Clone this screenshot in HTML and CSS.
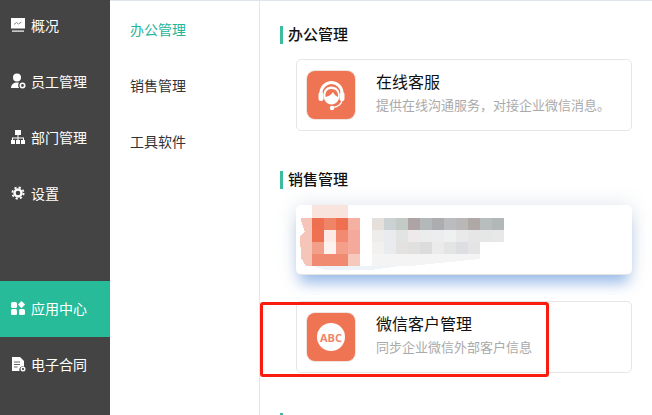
FILE: index.html
```html
<!DOCTYPE html>
<html lang="zh-CN">
<head>
    <meta charset="UTF-8">
    <meta name="viewport" content="width=device-width, initial-scale=1.0">
    <title>应用中心</title>
    <link rel="stylesheet" href="styles.css">
</head>
<body>
    <aside class="sidebar">
        <ul class="side-menu">
            <li class="side-item">
                <svg class="side-icon" viewBox="0 0 16 16"><path fill="#fff" d="M1 1h14v10.500H1z"/><path fill="none" stroke="#888" d="M4 7.500l2.500-2 2 1.500L11.500 5"/><path fill="#fff" d="M2 13.500h12v1.200H2z"/></svg>
                概况
            </li>
            <li class="side-item">
                <svg class="side-icon" viewBox="0 0 16 16"><circle cx="7" cy="4.500" r="4" fill="#fff"/><path fill="#fff" d="M1 15c0-3 2-5.500 6-5.500 .8 0 1.400.1 2 .3-1 1.200-1.200 3.500 0 5.200H1z"/><circle cx="12.500" cy="12.500" r="2.200" fill="none" stroke="#fff" stroke-width="1.600"/></svg>
                员工管理
            </li>
            <li class="side-item">
                <svg class="side-icon" viewBox="0 0 16 16"><path fill="#fff" d="M5 1h6v5H5zM7.500 6h1v2.500h5.500V11h-1V9.500H8.500V11h-1V9.500H3V11H2V8.500h5.500z"/><path fill="#fff" d="M1 11h4v4H1zM6 11h4v4H6zM11 11h4v4h-4z"/></svg>
                部门管理
            </li>
            <li class="side-item">
                <svg class="side-icon" viewBox="0 0 16 16"><circle cx="8" cy="8" r="3.500" fill="none" stroke="#fff" stroke-width="2.400"/><circle cx="8" cy="8" r="5.600" fill="none" stroke="#fff" stroke-width="1.800" stroke-dasharray="2.200 2.200"/></svg>
                设置
            </li>
            <li class="side-item side-item-active">
                <svg class="side-icon" viewBox="0 0 16 16"><rect x="1" y="2" width="6" height="6" rx="1.500" fill="#fff"/><path fill="#fff" d="M11.500 1l3.600 3.600-3.600 3.600L8 4.600z"/><rect x="1" y="9" width="6" height="6" rx="1.500" fill="#fff"/><rect x="9" y="9" width="6" height="6" rx="1.500" fill="#fff"/></svg>
                应用中心
            </li>
            <li class="side-item">
                <svg class="side-icon" viewBox="0 0 16 16"><path fill="#fff" d="M2 1h8l4 4v5.500a3.500 3.500 0 0 0-4.500 4.500H2z"/><path stroke="#666" d="M4 6h6M4 8.500h6M4 11h3.500"/><circle cx="13" cy="13" r="1.800" fill="none" stroke="#fff" stroke-width="1.400"/></svg>
                电子合同
            </li>
        </ul>
    </aside>

    <nav class="sub-nav">
        <a class="sub-link sub-link-active">办公管理</a>
        <a class="sub-link">销售管理</a>
        <a class="sub-link">工具软件</a>
    </nav>

    <main class="content">
        <section class="section">
            <h2 class="section-title">办公管理</h2>
            <div class="card">
                <div class="card-icon">
                    <svg viewBox="0 0 48 48" width="48" height="48">
                        <path fill="none" stroke="#fff" stroke-width="3" d="M14 25v-3a10.500 10.500 0 0 1 21 0v3"/>
                        <rect x="11.500" y="21" width="5" height="9" rx="2.500" fill="#fff"/>
                        <rect x="32.500" y="21" width="5" height="9" rx="2.500" fill="#fff"/>
                        <path fill="#fff" d="M16.500 24c0-5 3-8.500 8-8.500s8 3.500 8 8.500c0 5.500-3.500 9.500-8 9.500s-8-4-8-9.500z"/>
                        <path fill="#ee7454" d="M18.500 26c3.500-.5 6-2.500 7.500-5 1 2 2.500 4 5 5 .5-5-2-8-6.500-8s-6.500 3-6 8z"/>
                        <path fill="none" stroke="#fff" stroke-width="1.400" d="M35 29c0 4-4 7-9 7.500"/>
                        <circle cx="25" cy="37" r="2.200" fill="#fff"/>
                    </svg>
                </div>
                <div class="card-text">
                    <div class="card-title">在线客服</div>
                    <div class="card-desc">提供在线沟通服务，对接企业微信消息。</div>
                </div>
            </div>
        </section>

        <section class="section">
            <h2 class="section-title">销售管理</h2>
            <div class="card card-hover">
                <!-- pixelated part of the screenshot, coordinates are card relative -->
                <svg class="mosaic" viewBox="0 0 336 70" width="336" height="70" shape-rendering="crispEdges">
                    <path fill="#f9e3dd" d="M16 0h36v13H16z"/>
                    <path fill="#f5c5b9" d="M5 13h11v48h-6l-5-8-1-22 5-4-4-12z"/>
                    <path fill="#ee7050" d="M16 13h12v12H16z"/><path fill="#f08468" d="M28 13h12v12H28z"/><path fill="#ee7050" d="M40 13h12v12H40z"/><path fill="#f4b0a0" d="M52 13h12v12H52z"/>
                    <path fill="#ee7252" d="M16 25h12v12H16z"/><path fill="#fdeae4" d="M28 25h12v12H28z"/><path fill="#f18a70" d="M40 25h12v12H40z"/><path fill="#f4a99a" d="M52 25h12v12H52z"/>
                    <path fill="#f3a08a" d="M16 37h12v12H16z"/><path fill="#fef2ee" d="M28 37h12v12H28z"/><path fill="#f39f8a" d="M40 37h12v12H40z"/><path fill="#f4a99a" d="M52 37h12v12H52z"/>
                    <path fill="#f08a70" d="M16 49h36v12H16z"/><path fill="#f7c8bc" d="M52 49h12v12H52z"/>
                    <path fill="#eef3fa" d="M16 61h88l-30 4H30z"/>
                    <path fill="#e5e0dc" d="M76 13h12v12H76z"/><path fill="#ccd1d3" d="M88 13h12v12H88z"/><path fill="#c3cbc6" d="M100 13h12v12h-12z"/><path fill="#aea3a5" d="M112 13h12v12h-12z"/><path fill="#b3b8b9" d="M124 13h12v12h-12z"/><path fill="#adadaf" d="M136 13h12v12h-12z"/><path fill="#babcc0" d="M148 13h12v12h-12z"/><path fill="#bab8b7" d="M160 13h12v12h-12z"/><path fill="#aea9a7" d="M172 13h12v12h-12z"/><path fill="#b8bebd" d="M184 13h12v12h-12z"/><path fill="#b2b7b7" d="M196 13h12v12h-12z"/>
                    <path fill="#eeedeb" d="M76 25h12v12H76z"/><path fill="#e9ebee" d="M88 25h12v12H88z"/><path fill="#e2e4e4" d="M100 25h12v12h-12z"/><path fill="#eeeaec" d="M112 25h12v12h-12z"/><path fill="#ebecec" d="M124 25h12v12h-12z"/><path fill="#ecedee" d="M136 25h12v12h-12z"/><path fill="#eff0f0" d="M148 25h12v12h-12z"/><path fill="#e9e9ea" d="M160 25h12v12h-12z"/><path fill="#e6e6e7" d="M172 25h12v12h-12z"/><path fill="#e5e6e6" d="M184 25h12v12h-12z"/><path fill="#e8e8e8" d="M196 25h12v12h-12z"/>
                    <path fill="#f2f1ef" d="M76 37h12v12H76z"/><path fill="#e9ebee" d="M88 37h12v12H88z"/><path fill="#e3e2e1" d="M100 37h12v12h-12z"/><path fill="#e0e0e0" d="M112 37h12v12h-12z"/><path fill="#dcdcdc" d="M124 37h12v12h-12z"/><path fill="#ebebec" d="M136 37h12v12h-12z"/><path fill="#e4e4e5" d="M148 37h12v12h-12z"/><path fill="#dddee1" d="M160 37h12v12h-12z"/><path fill="#e4e4e4" d="M172 37h12v12h-12z"/>
                    <path fill="#f4f4f4" d="M76 49h108v5l-70 7H76z"/>
                </svg>
            </div>
            <div class="card">
                <div class="card-icon">
                    <span class="abc-badge">ABC</span>
                </div>
                <div class="card-text">
                    <div class="card-title">微信客户管理</div>
                    <div class="card-desc">同步企业微信外部客户信息</div>
                </div>
            </div>
        </section>

        <section class="section">
            <div class="section-title"></div>
        </section>
    </main>

    <div class="red-mark"></div>
</body>
</html>
```

FILE: styles.css
```css
html, body {
    height: 100%;
    margin: 0;
}

body {
    display: flex;
    overflow: hidden;
    color: #222;
    background: #fff;
    font-family: "Noto Sans CJK SC", "Liberation Sans", sans-serif;
    font-size: 14px;
}

/* left dark menu */
.sidebar {
    flex: 0 0 110px;
    background: #444;
    color: #fff;
}

.side-menu {
    list-style: none;
    margin: -2px 0 0;
    padding: 0;
}

.side-item {
    display: flex;
    align-items: center;
    gap: 5px;
    box-sizing: border-box;
    height: 56px;
    padding: 0 0 2px 10px;
}

.side-item:nth-child(5) {
    margin-top: 59px;
}

.side-item-active {
    background: #27bb9a;
}

.side-icon {
    width: 16px;
    height: 16px;
    flex: none;
}

/* second level menu */
.sub-nav {
    flex: 0 0 129px;
    display: flex;
    flex-direction: column;
    padding: 2px 0 0 20px;
    border-top: 1px solid #dfe4ef;
    border-right: 1px solid #e6e6e6;
}

.sub-link {
    height: 56px;
    line-height: 52px;
    color: #333;
}

.sub-link-active {
    color: #27b596;
}

/* right part */
.content {
    flex: 1;
    padding: 25px 0 0 20px;
    border-top: 1px solid #dfe4ef;
}

.section {
    margin-bottom: 40px;
}

.section-title {
    height: 18px;
    margin: 0 0 15px;
    padding-left: 5px;
    border-left: 3px solid #3dbb9e;
    font-size: 15px;
    font-weight: 500;
    line-height: 16px;
    color: #111;
}

.card {
    position: relative;
    display: flex;
    align-items: center;
    gap: 21px;
    box-sizing: border-box;
    width: 336px;
    height: 72px;
    margin-left: 16px;
    padding-left: 10px;
    border: 1px solid #e6e6e6;
    border-radius: 5px;
    background: #fff;
}

.card-hover {
    height: 70px;
    margin-top: 16px;
    margin-bottom: 26px;
    border: 0;
    border-bottom: 1px solid #e2e2e2;
    box-shadow: 0 0 20px rgba(110, 130, 165, 0.22), 0 12px 14px -4px rgba(90, 150, 230, 0.55);
}

.card-icon {
    display: flex;
    align-items: center;
    justify-content: center;
    width: 48px;
    height: 48px;
    flex: none;
    border-radius: 8px;
    background: #ee7454;
    box-shadow: 0 0 0 1px #f0e4e0;
}

.card-text {
    margin-bottom: 7px;
}

.card-title {
    font-size: 16px;
    line-height: 22px;
    color: #111;
}

.card-desc {
    margin-top: 4px;
    font-size: 13px;
    line-height: 18px;
    color: #aaa;
}

.abc-badge {
    display: flex;
    align-items: center;
    justify-content: center;
    width: 28px;
    height: 28px;
    border-radius: 50%;
    background: #fff;
    color: #f08468;
    font-family: "Open Sans", sans-serif;
    font-size: 11px;
    font-weight: 700;
}

.mosaic {
    position: absolute;
    top: 0;
    left: 0;
}

/* annotation drawn over the screenshot */
.red-mark {
    position: absolute;
    left: 260px;
    top: 302px;
    width: 283px;
    height: 69px;
    border: 3px solid #fb1c10;
    border-radius: 3px;
}
```
